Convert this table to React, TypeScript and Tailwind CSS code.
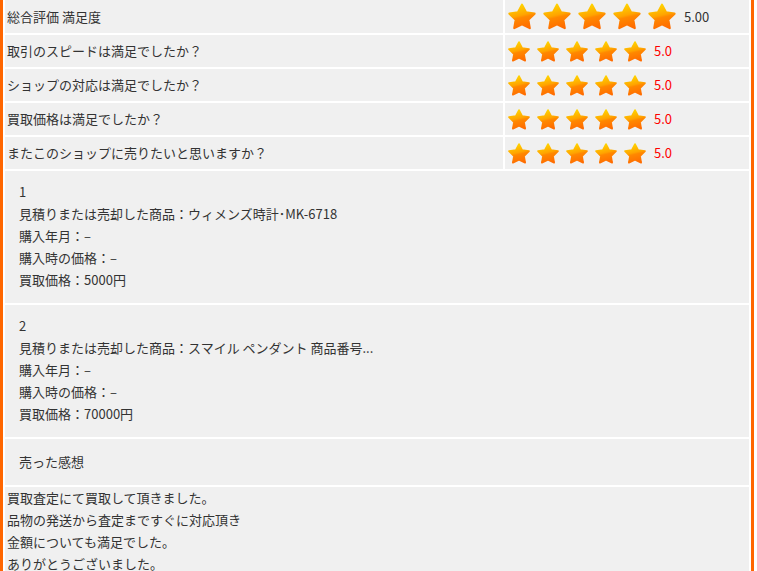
import { useId } from "react";

type StarProps = { big?: boolean };

function Star({ big }: StarProps) {
    const id = useId();
    return (
        <svg
            viewBox="0 0 24 24"
            className={big ? "w-[30px] h-[29px] shrink-0" : "w-[24px] h-[23px] shrink-0"}
        >
            <defs>
                <linearGradient id={id} x1="0.35" y1="0" x2="0.6" y2="1">
                    <stop offset="0" stopColor="#ffd600" />
                    <stop offset="0.45" stopColor="#ffa400" />
                    <stop offset="0.55" stopColor="#ff8800" />
                    <stop offset="1" stopColor="#ff6c00" />
                </linearGradient>
            </defs>
            <path
                d="M12 2.2L15.3 8.5L22.4 9.6L17.2 14.7L18.4 21.6L12 18.4L5.6 21.6L6.8 14.7L1.6 9.6L8.7 8.5Z"
                fill={`url(#${id})`}
                stroke={`url(#${id})`}
                strokeWidth="1.8"
                strokeLinejoin="round"
            />
        </svg>
    );
}

const ratings = [
    { q: "取引のスピードは満足でしたか？", v: "5.0" },
    { q: "ショップの対応は満足でしたか？", v: "5.0" },
    { q: "買取価格は満足でしたか？", v: "5.0" },
    { q: "またこのショップに売りたいと思いますか？", v: "5.0" },
];

const items = [
    {
        no: "1",
        name: "ウィメンズ時計･MK-6718",
        price: "5000円",
    },
    {
        no: "2",
        name: "スマイル ペンダント 商品番号...",
        price: "70000円",
    },
];

export default function App() {
    return (
        <div className="w-[754px] min-h-[571px] bg-white border-x-[3px] border-[#ff6600] px-[2px] flex flex-col gap-[2px] text-[13px] text-[#333] font-['Noto_Sans_CJK_JP','Noto_Sans',sans-serif]">
            {/* 総合評価 */}
            <div className="grid grid-cols-[498px_244px] gap-[2px] h-[33px]">
                <div className="bg-[#f0f0f0] flex items-center pl-[2px]">総合評価 満足度</div>
                <div className="bg-[#f0f0f0] flex items-center pl-[2px] gap-[5px]">
                    {[0, 1, 2, 3, 4].map((i) => (
                        <Star key={i} big />
                    ))}
                    <span className="ml-[2px] text-[#333]">5.00</span>
                </div>
            </div>

            {/* 各項目 */}
            {ratings.map((r) => (
                <div key={r.q} className="grid grid-cols-[498px_244px] gap-[2px] h-[32px]">
                    <div className="bg-[#f0f0f0] flex items-center pl-[2px]">{r.q}</div>
                    <div className="bg-[#f0f0f0] flex items-center pl-[2px] gap-[5px]">
                        {[0, 1, 2, 3, 4].map((i) => (
                            <Star key={i} />
                        ))}
                        <span className="ml-[2px] text-[#ff0000]">{r.v}</span>
                    </div>
                </div>
            ))}

            {/* 商品 */}
            {items.map((it) => (
                <div key={it.no} className="bg-[#f0f0f0] h-[132px] pt-[10px] pl-[14px] leading-[22px]">
                    <div>{it.no}</div>
                    <div>見積りまたは売却した商品：{it.name}</div>
                    <div>購入年月：–</div>
                    <div>購入時の価格：–</div>
                    <div>買取価格：{it.price}</div>
                </div>
            ))}

            <div className="bg-[#f0f0f0] h-[46px] flex items-center pl-[14px]">売った感想</div>

            <div className="bg-[#f0f0f0] flex-1 pl-[2px] leading-[22px] pb-2">
                <div>買取査定にて買取して頂きました。</div>
                <div>品物の発送から査定まですぐに対応頂き</div>
                <div>金額についても満足でした。</div>
                <div>ありがとうございました。</div>
            </div>
        </div>
    );
}
